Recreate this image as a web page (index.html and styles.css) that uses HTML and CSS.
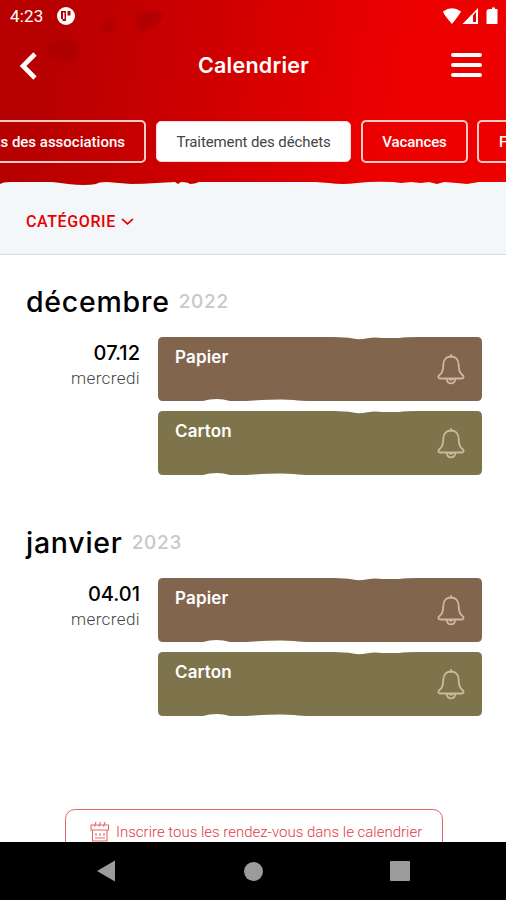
FILE: index.html
```html
<!DOCTYPE html>
<html lang="fr">
<head>
<meta charset="utf-8">
<title>Calendrier</title>
<link rel="stylesheet" href="styles.css">
</head>
<body>
<svg width="0" height="0" class="defs">
  <symbol id="bell" viewBox="0 0 28 32"><path d="M14 1.800v2M14 3.500c-5.200 0-7.700 4-7.700 8.500c0 5.500-1 8-3.800 10c-1.900 1.500-1.300 3.500.9 3.500h21.200c2.200 0 2.800-2 .9-3.500c-2.800-2-3.800-4.500-3.800-10c0-4.500-2.500-8.500-7.700-8.500zM9.600 25.800c.8 6 8 6 8.800 0M12.200 25.800c.4 1.500 3.200 1.500 3.600 0" fill="none" stroke="currentColor" stroke-width="1.800" stroke-linecap="round" stroke-linejoin="round"/></symbol>
  <symbol id="card" viewBox="0 0 324 64"><path d="M5 0H176Q187 0 195 1.500Q201 3 208 1.500Q217-.3 224 1H241Q248 0 260 0H319Q324 0 324 5V59Q324 64 319 64H154Q143 64 136 63Q122 62 96 63.500Q84 64.500 72 64Q65 62 59 62Q51 62 45 64H5Q0 64 0 59V5Q0 0 5 0Z" fill="currentColor"/></symbol>
</svg>
<div class="screen">
  <header class="header">
    <svg class="blots" viewBox="0 0 200 70"><path d="M48 45Q55 39 69 39Q81 41 80 52Q77 62 63 62Q46 60 48 45ZM103 23Q110 17 115 22Q114 30 107 33Q101 30 103 23ZM136 14Q148 9 162 13Q164 19 156 25Q144 33 138 30Q135 24 136 14Z"/></svg>
    <div class="status">
      <span class="time">4:23</span>
      <svg class="app" width="20" height="20" viewBox="0 0 20 20"><circle cx="10" cy="10" r="9" fill="#fff"/><path d="M5 5h5v10h-3.500v-2H5zM11.500 5H14.500v4.500h-3z" fill="#b70000"/><path d="M7 6.500h1.500v6.500H7z" fill="#fff"/></svg>
      <svg class="signals" width="58" height="18" viewBox="0 0 58 18"><path d="M1 4.500Q10-2 19 4.500Q18 7 10 17Q2 8 1 4.500ZM36 1V17H20.500ZM47.500 2H50V.5h3V2h2.500V17h-11V4.500Q44.500 2 47.500 2Z" fill="#fff"/><path d="M31 8.500L34 5V15H31Z" fill="#e60000"/></svg>
    </div>
    <div class="nav">
      <svg width="22" height="32" viewBox="0 0 22 32"><path d="M17 4L5 16L17 28" fill="none" stroke="#fff" stroke-width="4.600"/></svg>
      <h1>Calendrier</h1>
      <div class="burger"><i></i><i></i><i></i></div>
    </div>
    <div class="tabs">
      <div class="tab first"><span>ts des associations</span></div>
      <div class="tab active"><span>Traitement des déchets</span></div>
      <div class="tab vac"><span>Vacances</span></div>
      <div class="tab last"><span>F</span></div>
    </div>
  </header>
  <div class="filter">
    <svg class="torn" viewBox="0 0 506 6"><path fill="#f3f7f9" d="M0 6V3Q3 1 10 1H52Q61 2 68 3Q85 5 96 3Q98 1 107 1Q119 2 131 3Q144 3 156 2L175 1L178 3L181 1Q188 1 190 3Q195 3 199 1H315L329 2Q343 4 357 2Q374 0 393 1L401 2L411 1L421 2L429 1L437 3L444 1L457 2L467 3L479 1H506V6Z"/></svg>
    <span>CATÉGORIE</span>
    <svg width="13" height="8" viewBox="0 0 13 8"><path d="M1.500 1.300L6.500 5.800L11.500 1.300" fill="none" stroke="#e60000" stroke-width="1.700" stroke-linecap="round"/></svg>
  </div>
  <main class="content">
    <section class="month">
      <h2><b>décembre</b><span>2022</span></h2>
      <div class="day">
        <div class="date"><strong>07.12</strong><span>mercredi</span></div>
        <div class="events">
          <div class="event paper"><svg class="bg"><use href="#card"/></svg><span>Papier</span><svg class="bell"><use href="#bell"/></svg></div>
          <div class="event carton"><svg class="bg"><use href="#card"/></svg><span>Carton</span><svg class="bell"><use href="#bell"/></svg></div>
        </div>
      </div>
    </section>
    <section class="month">
      <h2><b>janvier</b><span>2023</span></h2>
      <div class="day">
        <div class="date"><strong>04.01</strong><span>mercredi</span></div>
        <div class="events">
          <div class="event paper"><svg class="bg"><use href="#card"/></svg><span>Papier</span><svg class="bell"><use href="#bell"/></svg></div>
          <div class="event carton"><svg class="bg"><use href="#card"/></svg><span>Carton</span><svg class="bell"><use href="#bell"/></svg></div>
        </div>
      </div>
    </section>
    <div class="subscribe">
      <svg width="20" height="21" viewBox="0 0 20 21"><path d="M1 4H18.500V9H1ZM2.500 9V20H17V9M4.500 5.500L6 1M9 5.500L10.500 1M13.500 5.500L15 1M6 12v3M10 12v3M14 12v3M5 17h10" fill="none" stroke="#e4686a" stroke-width="1.100"/></svg>
      <span>Inscrire tous les rendez-vous dans le calendrier</span>
    </div>
  </main>
  <footer class="system">
    <svg width="18" height="22" viewBox="0 0 18 22"><path d="M18 .5V21.500L0 11Z" fill="#9b9b9b"/></svg>
    <i class="home"></i>
    <i class="recent"></i>
  </footer>
</div>
</body>
</html>
```

FILE: styles.css
```css
* { box-sizing: border-box; }
body { margin: 0; font-family: Roboto, "Liberation Sans", sans-serif; background: #fff; }
.defs { position: absolute; }
.screen { width: 506px; height: 900px; display: flex; flex-direction: column; overflow: hidden; }
.screen span, .screen strong, .screen b, h1 { white-space: nowrap; }
.header { position: relative; flex: none; height: 182px; background: linear-gradient(100deg, #b70000 10%, #d20000 45%, #ec0000 76%); color: #fff; }
.blots { position: absolute; left: 0; top: 0; width: 200px; height: 70px; fill: #a90000; opacity: .65; filter: blur(1px); }
.status { position: relative; height: 32px; display: flex; align-items: center; padding: 0 6px 0 10px; }
.time { font-size: 17px; width: 46px; letter-spacing: .2px; }
.signals { margin-left: auto; }
.nav { position: relative; height: 66px; display: flex; align-items: center; justify-content: space-between; padding: 2px 24px 0 18px; }
h1 { margin: 0 0 2px; padding-left: 16px; font-family: Inter, Roboto, sans-serif; font-size: 21.5px; font-weight: 600; line-height: 28px; letter-spacing: .25px; }
.burger { display: flex; flex-direction: column; gap: 6px; width: 31px; margin-bottom: 3px; }
.burger i { height: 4px; border-radius: 2px; background: #fff; }
.tabs { display: flex; gap: 10px; margin-top: 22px; height: 43px; }
.tab { flex: none; display: flex; align-items: center; justify-content: center; height: 43px; border: 2px solid #ffc9c6; border-radius: 5px; font-size: 15px; font-weight: 500; }
.first { width: 166px; margin-left: -20px; justify-content: flex-end; padding-right: 19px; }
.active { width: 195px; height: 41px; margin-top: 1px; background: #fff; border: 1px solid #ffd9d6; color: #444; font-weight: 400; letter-spacing: -.12px; }
.vac { width: 107px; letter-spacing: -.1px; }
.last { width: 80px; margin-left: -1px; justify-content: flex-start; padding-left: 20px; }
.filter { position: relative; flex: none; height: 73px; display: flex; align-items: center; gap: 5px; padding: 7px 0 0 26px; border-bottom: 1px solid #d9dcde; background: #f3f7f9; color: #e60000; font-size: 16px; font-weight: 500; letter-spacing: .6px; }
.torn { position: absolute; top: -1px; left: 0; width: 506px; height: 6px; background: linear-gradient(90deg, #b70000, #cd0000 45%, #ec0000 80%); }
.content { flex: none; height: 587px; overflow: hidden; }
.month { height: 241px; padding-top: 29px; }
h2 { display: flex; align-items: center; height: 36px; margin: 0 0 17px 26px; gap: 9px; color: #000; font-family: Inter, Roboto, sans-serif; font-size: 28.5px; line-height: 36px; font-weight: 500; }
h2 b { font-weight: 550; letter-spacing: .75px; }
h2 span { font-size: 19px; color: #c8c8c8; letter-spacing: .7px; }
.day { display: flex; gap: 18px; }
.date { width: 140px; display: flex; flex-direction: column; align-items: flex-end; padding-top: 4px; }
.date strong { font-family: Inter, Roboto, sans-serif; font-size: 20px; line-height: 25px; font-weight: 550; color: #000; }
.date span { font-size: 17px; line-height: 24px; font-weight: 300; color: #444; letter-spacing: .4px; }
.events { display: flex; flex-direction: column; gap: 10px; }
.event { position: relative; width: 324px; height: 64px; display: flex; justify-content: space-between; align-items: flex-start; padding: 16px 17px 0; }
.paper { color: #81664d; }
.carton { color: #7e744b; }
.bg { position: absolute; inset: 0; width: 324px; height: 64px; }
.event span { position: relative; font-family: Inter, Roboto, sans-serif; color: #fff; font-size: 17px; line-height: 24px; margin-top: -8px; font-weight: 600; letter-spacing: .15px; }
.bell { position: relative; width: 28px; height: 32px; color: #ceb7a0; }
.subscribe { width: 378px; height: 60px; margin: 72px 0 0 65px; border: 1px solid #e4686a; border-radius: 10px; display: flex; gap: 6px; align-items: flex-start; padding: 11px 0 0 24px; color: #e23b3e; font-size: 15px; line-height: 22px; font-weight: 300; }
.system { flex: none; height: 58px; background: #000; display: flex; align-items: center; padding-left: 97px; }
.system i { background: #9b9b9b; }
.home { width: 19px; height: 19px; margin-left: 129px; border-radius: 50%; }
.recent { width: 20px; height: 20px; margin-left: 127px; border-radius: 1px; }
```
